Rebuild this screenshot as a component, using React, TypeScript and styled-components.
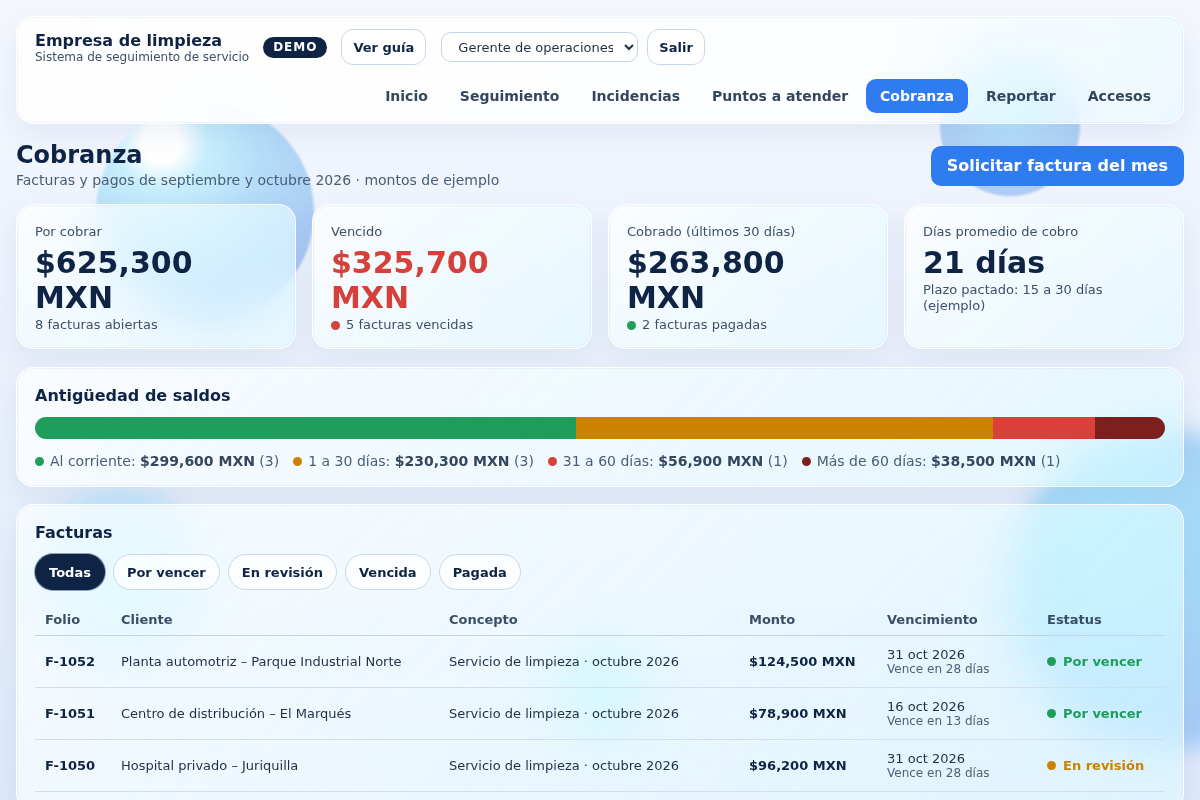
import * as React from 'react';
import styled, { createGlobalStyle } from 'styled-components';

const GlobalStyle = createGlobalStyle`
	html, body {
		margin: 0;
		padding: 0;
	}
	body {
		font-family: 'DejaVu Sans', 'Noto Sans', sans-serif;
		background: linear-gradient(180deg, #f4f7fd 0%, #e9f0fb 55%, #dce8fa 100%);
		color: #0f2444;
		min-height: 100vh;
		overflow: hidden;
	}
	* { box-sizing: border-box; }
`;

const Blob = styled.div<{ $x: number; $y: number; $size: number; $bg: string; $blur?: number }>`
	position: fixed;
	left: ${({ $x, $size }) => $x - $size / 2}px;
	top: ${({ $y, $size }) => $y - $size / 2}px;
	width: ${({ $size }) => $size}px;
	height: ${({ $size }) => $size}px;
	border-radius: 50%;
	background: ${({ $bg }) => $bg};
	filter: blur(${({ $blur }) => $blur ?? 0}px);
	z-index: 0;
	pointer-events: none;
`;

const Page = styled.div`
	position: relative;
	z-index: 1;
	padding: 16px;
	display: flex;
	flex-direction: column;
`;

const Glass = styled.section`
	background: linear-gradient(135deg, rgba(255, 255, 255, 0.74) 0%, rgba(226, 251, 255, 0.58) 100%);
	backdrop-filter: blur(22px) saturate(150%);
	border: 1px solid rgba(255, 255, 255, 0.95);
	border-radius: 18px;
	box-shadow: 0 10px 28px rgba(40, 80, 150, 0.08), inset 0 0 0 1px rgba(200, 218, 240, 0.3);
`;

const HeaderCard = styled(Glass)`
	padding: 12px 18px 10px;
	display: flex;
	flex-direction: column;
	gap: 14px;
	background: linear-gradient(100deg, rgba(255, 255, 255, 0.9) 0%, rgba(255, 255, 255, 0.84) 70%, rgba(234, 250, 255, 0.62) 100%);
`;

const TopRow = styled.div`
	display: flex;
	align-items: center;
	height: 36px;
`;

const Brand = styled.div`
	display: flex;
	flex-direction: column;
	margin-right: 14px;
`;

const BrandTitle = styled.div`
	font-size: 16px;
	font-weight: 700;
	line-height: 19px;
	color: #0f2444;
`;

const BrandSub = styled.div`
	font-size: 12px;
	line-height: 14px;
	color: #3d5069;
`;

const Badge = styled.span`
	display: inline-flex;
	align-items: center;
	height: 21px;
	padding: 0 10px;
	border-radius: 11px;
	background: #0f2444;
	color: #fff;
	font-size: 12px;
	font-weight: 700;
	letter-spacing: 1px;
	margin-right: 14px;
`;

const OutlineButton = styled.button<{ $gap?: number }>`
	height: 36px;
	padding: 0 11px;
	border-radius: 12px;
	border: 1px solid #c9d7ea;
	background: rgba(255, 255, 255, 0.9);
	font-family: inherit;
	font-size: 13px;
	font-weight: 700;
	color: #0f2444;
	margin-right: ${({ $gap }) => $gap ?? 0}px;
`;

const RoleSelect = styled.select`
	width: 197px;
	height: 30px;
	border-radius: 10px;
	border: 1px solid #c5d4e8;
	background: #fff;
	padding: 0 8px 0 12px;
	font-family: inherit;
	font-size: 13px;
	color: #1f2f45;
	margin-right: 9px;
`;

const Nav = styled.nav`
	display: flex;
	justify-content: flex-end;
	gap: 4px;
`;

const NavItem = styled.a<{ $active?: boolean }>`
	display: inline-flex;
	align-items: center;
	height: 34px;
	padding: 0 14px;
	border-radius: 10px;
	font-size: 14px;
	font-weight: 700;
	color: ${({ $active }) => ($active ? '#fff' : '#33465e')};
	background: ${({ $active }) => ($active ? '#2f7cf0' : 'transparent')};
	text-decoration: none;
`;

const TitleRow = styled.div`
	display: flex;
	align-items: center;
	justify-content: space-between;
	margin-top: 16px;
`;

const PageTitle = styled.h1`
	margin: 0;
	font-size: 24px;
	line-height: 30px;
	font-weight: 700;
	color: #0f2444;
`;

const PageSub = styled.div`
	font-size: 14px;
	line-height: 21px;
	color: #4a5d75;
`;

const PrimaryButton = styled.button`
	height: 40px;
	padding: 0 16px;
	border: none;
	border-radius: 10px;
	background: #2f7cf0;
	color: #fff;
	font-family: inherit;
	font-size: 16px;
	font-weight: 700;
`;

const KpiGrid = styled.div`
	display: grid;
	grid-template-columns: repeat(4, 1fr);
	gap: 16px;
	margin-top: 13px;
`;

const KpiCard = styled(Glass)`
	padding: 18px 18px 17px;
	height: 145px;
`;

const KpiLabel = styled.div`
	font-size: 13px;
	line-height: 17px;
	color: #3d5069;
`;

const KpiValue = styled.div<{ $tone?: 'danger' }>`
	margin-top: 5px;
	font-size: 30px;
	line-height: 35px;
	font-weight: 700;
	color: ${({ $tone }) => ($tone === 'danger' ? '#d6403a' : '#0f2444')};
`;

const KpiSub = styled.div`
	margin-top: 2px;
	font-size: 13px;
	line-height: 16px;
	color: #3d5069;
	display: flex;
	align-items: center;
	gap: 6px;
`;

const Dot = styled.span<{ $color: string }>`
	display: inline-block;
	flex: none;
	width: 9px;
	height: 9px;
	border-radius: 50%;
	background: ${({ $color }) => $color};
`;

const AgingCard = styled(Glass)`
	margin-top: 18px;
	padding: 18px 18px 16px;
`;

const SectionTitle = styled.h2`
	margin: 0;
	font-size: 16px;
	line-height: 20px;
	font-weight: 700;
	color: #0f2444;
`;

const Bar = styled.div`
	margin-top: 11px;
	height: 22px;
	border-radius: 11px;
	overflow: hidden;
	display: flex;
`;

const BarSegment = styled.div<{ $color: string }>`
	height: 100%;
	background: ${({ $color }) => $color};
`;

const Legend = styled.div`
	margin-top: 13px;
	display: flex;
	gap: 14px;
	font-size: 14px;
	line-height: 18px;
	color: #4a5d75;
`;

const LegendItem = styled.span`
	display: inline-flex;
	align-items: center;
	gap: 6px;
	white-space: nowrap;

	b {
		color: #33465e;
	}
`;

const InvoicesCard = styled(Glass)`
	margin-top: 17px;
	padding: 18px 18px 18px;
`;

const Chips = styled.div`
	margin-top: 11px;
	display: flex;
	gap: 8px;
`;

const Chip = styled.button<{ $active?: boolean }>`
	height: 36px;
	padding: 0 13px;
	border-radius: 18px;
	border: 1px solid ${({ $active }) => ($active ? '#0f2444' : '#c9d7ea')};
	background: ${({ $active }) => ($active ? '#0f2444' : 'rgba(255,255,255,0.75)')};
	color: ${({ $active }) => ($active ? '#fff' : '#0f2444')};
	font-family: inherit;
	font-size: 13px;
	font-weight: 700;
	box-shadow: ${({ $active }) => ($active ? '0 0 0 1px #8fa2bd' : 'none')};
`;

const Table = styled.table`
	margin-top: 13px;
	width: 100%;
	border-collapse: collapse;
	table-layout: fixed;
	font-size: 13px;
`;

const Th = styled.th`
	text-align: left;
	padding: 9px 10px 8px;
	font-weight: 700;
	color: #3b4e68;
	border-bottom: 1px solid #c3d1e2;
`;

const Td = styled.td<{ $strong?: boolean }>`
	height: 52px;
	padding: 0 10px;
	border-bottom: 1px solid #d3deeb;
	color: ${({ $strong }) => ($strong ? '#0f2444' : '#1f2f45')};
	font-weight: ${({ $strong }) => ($strong ? 700 : 400)};
	vertical-align: middle;
	white-space: nowrap;
`;

const DueDate = styled.div`
	line-height: 15px;
`;

const DueHint = styled.div`
	font-size: 12px;
	line-height: 14px;
	color: #4f6177;
`;

const Status = styled.span<{ $color: string }>`
	display: inline-flex;
	align-items: center;
	gap: 7px;
	font-weight: 700;
	color: ${({ $color }) => $color};
`;

const GREEN = '#1f9d5a';
const ORANGE = '#c98300';
const RED = '#d8413a';
const MAROON = '#7b1f1f';

const aging = [
	{ label: 'Al corriente:', amount: 299600, count: 3, color: GREEN },
	{ label: '1 a 30 días:', amount: 230300, count: 3, color: ORANGE },
	{ label: '31 a 60 días:', amount: 56900, count: 1, color: RED },
	{ label: 'Más de 60 días:', amount: 38500, count: 1, color: MAROON },
];

const invoices = [
	{
		folio: 'F-1052',
		client: 'Planta automotriz – Parque Industrial Norte',
		concept: 'Servicio de limpieza · octubre 2026',
		amount: '$124,500 MXN',
		due: '31 oct 2026',
		hint: 'Vence en 28 días',
		status: 'Por vencer',
		color: GREEN,
	},
	{
		folio: 'F-1051',
		client: 'Centro de distribución – El Marqués',
		concept: 'Servicio de limpieza · octubre 2026',
		amount: '$78,900 MXN',
		due: '16 oct 2026',
		hint: 'Vence en 13 días',
		status: 'Por vencer',
		color: GREEN,
	},
	{
		folio: 'F-1050',
		client: 'Hospital privado – Juriquilla',
		concept: 'Servicio de limpieza · octubre 2026',
		amount: '$96,200 MXN',
		due: '31 oct 2026',
		hint: 'Vence en 28 días',
		status: 'En revisión',
		color: ORANGE,
	},
];

const navItems = ['Inicio', 'Seguimiento', 'Incidencias', 'Puntos a atender', 'Cobranza', 'Reportar', 'Accesos'];
const filters = ['Todas', 'Por vencer', 'En revisión', 'Vencida', 'Pagada'];

const money = (n: number) => `$${n.toLocaleString('en-US')} MXN`;

const App = (): JSX.Element => {
	const total = aging.reduce((s, a) => s + a.amount, 0);

	return (
		<>
			<GlobalStyle />
			<Blob $x={205} $y={212} $size={218} $bg="radial-gradient(circle at 30% 18%, #ffffff 0%, #ffffff 8%, #c6eefc 20%, #b5dcf8 45%, #a8c8f2 80%, #aac6f1 100%)" $blur={1} />
			<Blob $x={1010} $y={126} $size={140} $bg="radial-gradient(circle at 50% 30%, #b3eefc 0%, #b3d6f7 45%, #aac4f2 100%)" $blur={1} />
			<Blob $x={1165} $y={590} $size={320} $bg="radial-gradient(circle at 35% 35%, #a8e6fb 0%, #a7d3f7 45%, #a6c4f3 100%)" $blur={10} />
			<Blob $x={120} $y={580} $size={190} $bg="radial-gradient(circle, #b6e9fb 0%, #c2e6fa 55%, rgba(200,230,250,0) 100%)" $blur={10} />
			<Blob $x={600} $y={690} $size={120} $bg="radial-gradient(circle, #a9e8fb 0%, rgba(190,235,252,0) 100%)" $blur={6} />
			<Page>
				<HeaderCard>
					<TopRow>
						<Brand>
							<BrandTitle>Empresa de limpieza</BrandTitle>
							<BrandSub>Sistema de seguimiento de servicio</BrandSub>
						</Brand>
						<Badge>DEMO</Badge>
						<OutlineButton $gap={15}>Ver guía</OutlineButton>
						<RoleSelect defaultValue="gerente">
							<option value="gerente">Gerente de operaciones</option>
						</RoleSelect>
						<OutlineButton>Salir</OutlineButton>
					</TopRow>
					<Nav>
						{navItems.map((item) => (
							<NavItem key={item} $active={item === 'Cobranza'}>
								{item}
							</NavItem>
						))}
					</Nav>
				</HeaderCard>

				<TitleRow>
					<div>
						<PageTitle>Cobranza</PageTitle>
						<PageSub>Facturas y pagos de septiembre y octubre 2026 · montos de ejemplo</PageSub>
					</div>
					<PrimaryButton>Solicitar factura del mes</PrimaryButton>
				</TitleRow>

				<KpiGrid>
					<KpiCard>
						<KpiLabel>Por cobrar</KpiLabel>
						<KpiValue>$625,300 MXN</KpiValue>
						<KpiSub>8 facturas abiertas</KpiSub>
					</KpiCard>
					<KpiCard>
						<KpiLabel>Vencido</KpiLabel>
						<KpiValue $tone="danger">$325,700 MXN</KpiValue>
						<KpiSub>
							<Dot $color={RED} />5 facturas vencidas
						</KpiSub>
					</KpiCard>
					<KpiCard>
						<KpiLabel>Cobrado (últimos 30 días)</KpiLabel>
						<KpiValue>$263,800 MXN</KpiValue>
						<KpiSub>
							<Dot $color={GREEN} />2 facturas pagadas
						</KpiSub>
					</KpiCard>
					<KpiCard>
						<KpiLabel>Días promedio de cobro</KpiLabel>
						<KpiValue>21 días</KpiValue>
						<KpiSub>Plazo pactado: 15 a 30 días (ejemplo)</KpiSub>
					</KpiCard>
				</KpiGrid>

				<AgingCard>
					<SectionTitle>Antigüedad de saldos</SectionTitle>
					<Bar>
						{aging.map((a) => (
							<BarSegment key={a.label} $color={a.color} style={{ width: `${(a.amount / total) * 100}%` }} />
						))}
					</Bar>
					<Legend>
						{aging.map((a) => (
							<LegendItem key={a.label}>
								<Dot $color={a.color} />
								<span>
									{a.label} <b>{money(a.amount)}</b> ({a.count})
								</span>
							</LegendItem>
						))}
					</Legend>
				</AgingCard>

				<InvoicesCard>
					<SectionTitle>Facturas</SectionTitle>
					<Chips>
						{filters.map((f) => (
							<Chip key={f} $active={f === 'Todas'}>
								{f}
							</Chip>
						))}
					</Chips>
					<Table>
						<colgroup>
							<col style={{ width: 76 }} />
							<col style={{ width: 328 }} />
							<col style={{ width: 300 }} />
							<col style={{ width: 138 }} />
							<col style={{ width: 160 }} />
							<col style={{ width: 128 }} />
						</colgroup>
						<thead>
							<tr>
								<Th>Folio</Th>
								<Th>Cliente</Th>
								<Th>Concepto</Th>
								<Th>Monto</Th>
								<Th>Vencimiento</Th>
								<Th>Estatus</Th>
							</tr>
						</thead>
						<tbody>
							{invoices.map((inv) => (
								<tr key={inv.folio}>
									<Td $strong>{inv.folio}</Td>
									<Td>{inv.client}</Td>
									<Td>{inv.concept}</Td>
									<Td $strong>{inv.amount}</Td>
									<Td>
										<DueDate>{inv.due}</DueDate>
										<DueHint>{inv.hint}</DueHint>
									</Td>
									<Td>
										<Status $color={inv.color}>
											<Dot $color={inv.color} />
											{inv.status}
										</Status>
									</Td>
								</tr>
							))}
						</tbody>
					</Table>
				</InvoicesCard>
			</Page>
		</>
	);
};

export default App;
